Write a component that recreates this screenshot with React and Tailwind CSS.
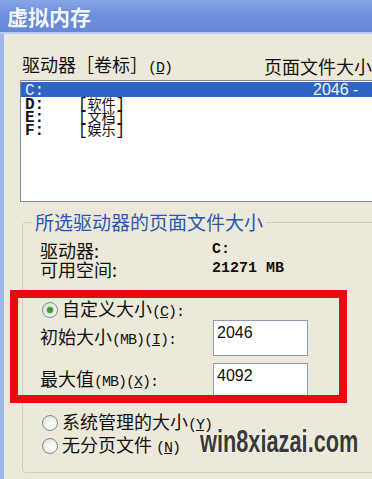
import React from 'react';

const cjk = "font-['Noto_Sans_CJK_SC',sans-serif]";
const mono = "font-['Liberation_Mono','Noto_Sans_CJK_SC',monospace]";

function Radio({ checked }) {
    return (
        <div className="w-[16px] h-[16px] rounded-full border border-[#7c8ba0] bg-[radial-gradient(circle_at_60%_65%,#ffffff_0%,#f2f2ec_45%,#d6d6cc_100%)] flex items-center justify-center shrink-0">
            {checked && <div className="w-[6px] h-[6px] rounded-full bg-[#3c9a3a] shadow-[0_0_2px_1px_#a9d8a0]" />}
        </div>
    );
}

function Box({ value, h }) {
    return (
        <div className={`w-[95px] ${h} bg-white border border-[#8e9aaa] pl-[3px] pt-[3px] text-[16px] leading-[18px] font-['Liberation_Sans',sans-serif] text-[#111]`}>
            {value}
        </div>
    );
}

export default function App() {
    const drives = [
        { d: 'D:', label: '软件' },
        { d: 'E:', label: '文档' },
        { d: 'F:', label: '娱乐' },
    ];

    return (
        <div className={`relative w-[372px] h-[479px] overflow-hidden bg-[#ede9da] flex flex-col text-[#111] ${cjk}`}>
            <div className="h-[32px] shrink-0 flex items-center pl-[7px] bg-[linear-gradient(180deg,#86a6e8_0%,#6d92dd_45%,#6589d8_100%)]">
                <span className="text-[21px] font-bold leading-none text-[#f3f6ff] [text-shadow:0_0_2px_#5a7cc8]">虚拟内存</span>
            </div>
            <div className="h-[2px] shrink-0 bg-[#b7ccf2]" />

            <div className="flex-1 border-l-[4px] border-[#9ab6ea] flex flex-col">
                <div className="mt-[22px] ml-[18px] h-[20px] flex items-center text-[18px] leading-[20px] whitespace-nowrap">
                    <div className="w-[246px]">
                        驱动器［卷标］<span className={`${mono} text-[15px] tracking-[-1px]`}>(<u>D</u>)</span>
                    </div>
                    <span>页面文件大小</span>
                </div>

                <div className={`mt-[4px] ml-[16px] w-[400px] h-[122px] border border-[#7f8c9c] bg-white pt-[1px] ${mono} text-[16px]`}>
                    <div className="h-[15px] pl-[4px] bg-[#2f63c4] text-[#eef3ff] leading-[15px] whitespace-nowrap">
                        <span className="inline-block w-[53px]">C:</span>
                        <span className="inline-block w-[235px]" />
                        <span className="font-['Liberation_Sans',sans-serif]">2046 -</span>
                    </div>
                    {drives.map(r => (
                        <div key={r.d} className="h-[13px] pl-[4px] leading-[13px] whitespace-nowrap">
                            <span className="inline-block w-[53px] font-bold">{r.d}</span>
                            [<span className={`${cjk} text-[14px]`}>{r.label}</span>]
                        </div>
                    ))}
                </div>

                <div className="mt-[20px] ml-[18px] w-[400px] h-[251px] border border-[#cfcdbf] rounded-[4px] flex flex-col">
                    <div className="-mt-[11px] ml-[9px] px-[3px] w-fit h-[20px] bg-[#ede9da] text-[19px] leading-[20px] text-[#2757b4] whitespace-nowrap">
                        所选驱动器的页面文件大小
                    </div>

                    <div className="mt-[9px] pl-[17px] h-[19px] flex items-center text-[18px]">
                        <span className="w-[172px]">驱动器:</span>
                        <span className={`${mono} text-[15px] font-bold`}>C:</span>
                    </div>
                    <div className="pl-[17px] h-[19px] flex items-center text-[18px]">
                        <span className="w-[172px]">可用空间:</span>
                        <span className={`${mono} text-[15px] font-bold`}>21271 MB</span>
                    </div>

                    <div className="mt-[11px] -ml-[13px] w-[337px] h-[113px] border-[8px] border-[#e60c14] flex flex-col overflow-hidden">
                        <div className="mt-[2px] pl-[24px] h-[20px] flex items-center gap-[4px] text-[18px] leading-[20px] whitespace-nowrap">
                            <Radio checked />
                            <span>自定义大小<span className={`${mono} text-[15px] tracking-[-1px]`}>(<u>C</u>):</span></span>
                        </div>
                        <div className="pl-[22px] h-[36px] flex items-center">
                            <div className="w-[173px] text-[18px] leading-[20px] whitespace-nowrap">
                                初始大小<span className={`${mono} text-[15px] tracking-[-1px]`}>(MB)(<u>I</u>):</span>
                            </div>
                            <Box value="2046" h="h-[36px]" />
                        </div>
                        <div className="mt-[7px] pl-[22px] h-[32px] flex items-start">
                            <div className="w-[173px] h-[34px] flex items-center text-[18px] leading-[20px] whitespace-nowrap">
                                <span>最大值<span className={`${mono} text-[15px] tracking-[-1px]`}>(MB)(<u>X</u>):</span></span>
                            </div>
                            <Box value="4092" h="h-[40px]" />
                        </div>
                    </div>

                    <div className="mt-[10px] pl-[19px] h-[20px] flex items-center gap-[4px] text-[18px] leading-[20px] whitespace-nowrap">
                        <Radio />
                        <span>系统管理的大小<span className={`${mono} text-[15px] tracking-[-1px]`}>(<u>Y</u>)</span></span>
                    </div>
                    <div className="mt-[3px] pl-[19px] h-[20px] flex items-center gap-[4px] text-[18px] leading-[20px] whitespace-nowrap">
                        <Radio />
                        <span>无分页文件 <span className={`${mono} text-[15px] tracking-[-1px]`}>(<u>N</u>)</span></span>
                    </div>
                </div>
            </div>

            <div className="absolute left-[200px] top-[425px] origin-left scale-x-[0.68] text-[32px] leading-[32px] font-bold text-[#3a3a3a] font-['Liberation_Sans',sans-serif] whitespace-nowrap [text-shadow:0_0_2px_#fff,0_0_1px_#fff]">
                win8xiazai.com
            </div>
        </div>
    );
}
